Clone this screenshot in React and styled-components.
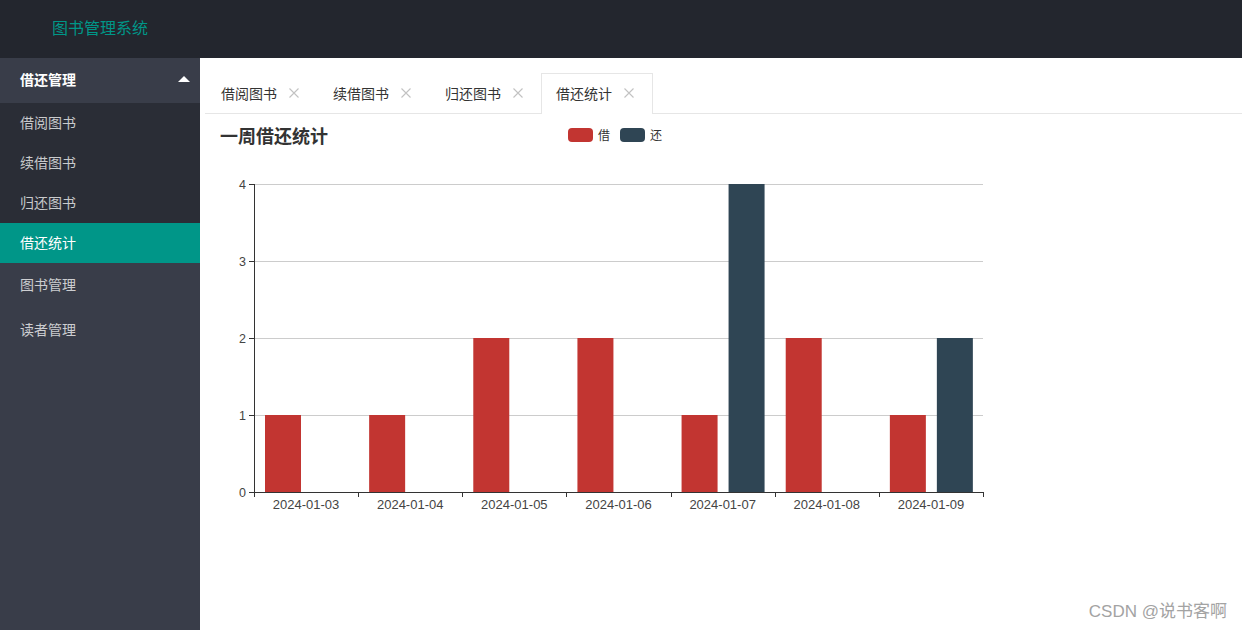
import React from 'react'
import styled, { createGlobalStyle } from 'styled-components'

const GlobalStyle = createGlobalStyle`
  html, body {
    margin: 0;
    padding: 0;
    background: #fff;
    font-family: "Noto Sans CJK SC", "Noto Sans", sans-serif;
    font-size: 14px;
    color: #333;
  }
`

const Page = styled.div`
  width: 1242px;
  height: 630px;
  display: grid;
  grid-template-rows: 58px 1fr;
  grid-template-columns: 200px 1fr;
  position: relative;
  overflow: hidden;
`

const Header = styled.div`
  grid-column: 1 / 3;
  background: #23262e;
  display: flex;
  align-items: center;
  padding-left: 52px;
  padding-bottom: 4px;
  box-sizing: border-box;
`

const Logo = styled.div`
  color: #009688;
  font-size: 16px;
`

const Sidebar = styled.div`
  background: #393d49;
  display: flex;
  flex-direction: column;
`

const NavItem = styled.div`
  height: ${props => props.sub ? '40px' : '45px'};
  box-sizing: border-box;
  padding: 0 10px ${props => props.sub ? '2px' : '4px'} 20px;
  display: flex;
  align-items: center;
  justify-content: space-between;
  font-size: 14px;
  color: ${props => props.active || props.open ? '#fff' : 'rgba(255,255,255,0.75)'};
  font-weight: ${props => props.open ? 600 : 400};
  background: ${props => props.active ? '#009688' : props.sub ? '#2a2d36' : 'transparent'};
`

const Caret = styled.span`
  width: 0;
  height: 0;
  border-left: 6px solid transparent;
  border-right: 6px solid transparent;
  border-bottom: 6px solid #fff;
`

const Main = styled.div`
  padding: 15px 0 0 5px;
  display: flex;
  flex-direction: column;
`

const TabBar = styled.div`
  display: flex;
  height: 40px;
  border-bottom: 1px solid #e6e6e6;
`

const Tab = styled.div`
  width: 112px;
  box-sizing: border-box;
  display: flex;
  align-items: center;
  font-size: 14px;
  color: #333;
  border: 1px solid ${props => props.active ? '#e6e6e6' : 'transparent'};
  border-bottom: none;
  height: ${props => props.active ? '41px' : '40px'};
  background: #fff;
  padding: 0 0 2px ${props => props.active ? '14px' : '15px'};
`

const TabClose = styled.svg`
  margin-left: 12px;
  width: 10px;
  height: 10px;
`

const ChartPanel = styled.div`
  width: 820px;
  display: flex;
  flex-direction: column;
`

const ChartHead = styled.div`
  display: grid;
  grid-template-columns: 1fr auto 1fr;
  align-items: start;
  box-sizing: border-box;
  padding-top: 8px;
  height: 36px;
`

const ChartTitle = styled.div`
  font-size: 18px;
  font-weight: 700;
  color: #333;
  padding-left: 15px;
  line-height: 26px;
`

const Legend = styled.div`
  display: flex;
  gap: 10px;
  padding-top: 6px;
`

const LegendItem = styled.div`
  display: flex;
  align-items: center;
  gap: 5px;
  font-size: 12px;
  color: #333;
  line-height: 14px;
`

const Swatch = styled.span`
  width: 25px;
  height: 14px;
  border-radius: 4px;
  background: ${props => props.color};
`

const Watermark = styled.div`
  position: absolute;
  right: 15px;
  bottom: 8px;
  font-size: 17px;
  color: #a3a3a3;
  font-family: "Liberation Sans", "Noto Sans CJK SC", sans-serif;
`

const dates = ['2024-01-03', '2024-01-04', '2024-01-05', '2024-01-06', '2024-01-07', '2024-01-08', '2024-01-09']
const borrow = [1, 1, 2, 2, 1, 2, 1]
const back = [0, 0, 0, 0, 4, 0, 2]

const Chart = () => {
  // plot coords relative to svg (svg starts at x=205, y=150)
  const x0 = 49
  const x1 = 778
  const yTop = 34
  const yBot = 342
  const unit = (yBot - yTop) / 4
  const cw = (x1 - x0) / 7
  return (
    <svg width="820" height="380" style={{ display: 'block' }}>
      {[0, 1, 2, 3, 4].map(v => {
        const y = yBot - v * unit + 0.5
        return (
          <g key={v}>
            {v > 0 && <line x1={x0} x2={x1} y1={y} y2={y} stroke="#ccc" strokeWidth="1" />}
            <line x1={x0 - 5} x2={x0} y1={y} y2={y} stroke="#333" strokeWidth="1" />
            <text x={x0 - 8} y={y + 4} textAnchor="end" fontSize="12.5" fill="#444" fontFamily="'Liberation Sans', sans-serif">{v}</text>
          </g>
        )
      })}
      {dates.map((d, i) => {
        const cx = x0 + i * cw
        return (
          <g key={d}>
            <rect x={cx + 11} y={yBot - borrow[i] * unit} width="36" height={borrow[i] * unit} fill="#c23531" />
            {back[i] > 0 && <rect x={cx + 58} y={yBot - back[i] * unit} width="36" height={back[i] * unit} fill="#2f4554" />}
            <text x={cx + cw / 2} y={yBot + 17} textAnchor="middle" fontSize="13" fill="#444" fontFamily="'Liberation Sans', sans-serif">{d}</text>
          </g>
        )
      })}
      <line x1={x0 + 0.5} x2={x0 + 0.5} y1={yTop} y2={yBot} stroke="#333" />
      <line x1={x0} x2={x1 + 1} y1={yBot + 0.5} y2={yBot + 0.5} stroke="#333" />
      {[0, 1, 2, 3, 4, 5, 6, 7].map(k => {
        const x = Math.round(x0 + k * cw) + 0.5
        return <line key={k} x1={x} x2={x} y1={yBot} y2={yBot + 5} stroke="#333" />
      })}
    </svg>
  )
}

const CloseIcon = () => (
  <TabClose viewBox="0 0 10 10">
    <path d="M0.5 0.5 L9.5 9.5 M9.5 0.5 L0.5 9.5" stroke="#c2c2c2" strokeWidth="1.1" fill="none" />
  </TabClose>
)

const App = () => {
  const tabs = ['借阅图书', '续借图书', '归还图书', '借还统计']
  return (
    <Page>
      <GlobalStyle />
      <Header>
        <Logo>图书管理系统</Logo>
      </Header>
      <Sidebar>
        <NavItem open>
          借还管理
          <Caret />
        </NavItem>
        <NavItem sub>借阅图书</NavItem>
        <NavItem sub>续借图书</NavItem>
        <NavItem sub>归还图书</NavItem>
        <NavItem sub active>借还统计</NavItem>
        <NavItem>图书管理</NavItem>
        <NavItem>读者管理</NavItem>
      </Sidebar>
      <Main>
        <TabBar>
          {tabs.map((t, i) => (
            <Tab key={t} active={i === 3}>
              {t}
              <CloseIcon />
            </Tab>
          ))}
        </TabBar>
        <ChartPanel>
          <ChartHead>
            <ChartTitle>一周借还统计</ChartTitle>
            <Legend>
              <LegendItem><Swatch color="#c23531" />借</LegendItem>
              <LegendItem><Swatch color="#2f4554" />还</LegendItem>
            </Legend>
          </ChartHead>
          <Chart />
        </ChartPanel>
      </Main>
      <Watermark>CSDN @说书客啊</Watermark>
    </Page>
  )
}

export default App
